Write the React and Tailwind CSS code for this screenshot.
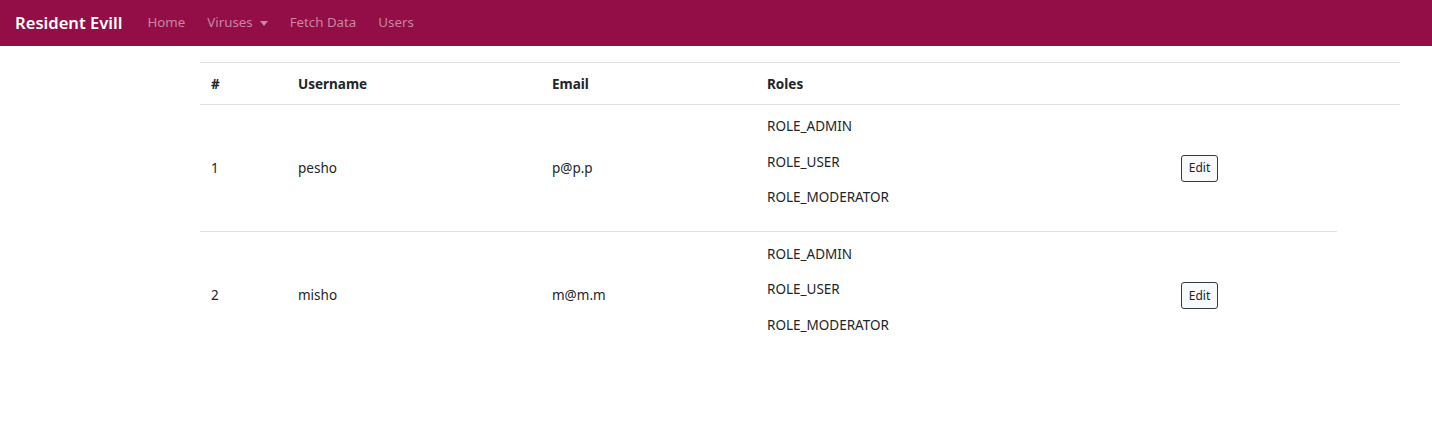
import React from 'react'

const users = [
  { id: 1, username: 'pesho', email: 'p@p.p', roles: ['ROLE_ADMIN', 'ROLE_USER', 'ROLE_MODERATOR'] },
  { id: 2, username: 'misho', email: 'm@m.m', roles: ['ROLE_ADMIN', 'ROLE_USER', 'ROLE_MODERATOR'] }
]

const Navbar = () => (
  <nav className="h-[46px] bg-[#930e47] flex items-center pl-[15px]">
    <span className="text-[16.6px] font-semibold text-white mr-[14px]">Resident Evill</span>
    <div className="flex items-center text-[13.3px] text-[#c985a3]">
      <span className="px-[11px]">Home</span>
      <span className="px-[11px] flex items-center">
        Viruses
        <span className="ml-[7px] w-0 h-0 border-l-[4.5px] border-r-[4.5px] border-t-[5px] border-l-transparent border-r-transparent border-t-[#c985a3]" />
      </span>
      <span className="px-[11px]">Fetch Data</span>
      <span className="px-[11px]">Users</span>
    </div>
  </nav>
)

const App = () => {
  return (
    <div className="min-h-[430px] bg-white text-[#212529] font-['Noto_Sans',sans-serif]">
      <Navbar />
      <div className="pl-[200px] pt-[16px] text-[13.5px]">
        <div className="w-[1200px] h-[43px] border-t border-b border-[#dee2e6] grid grid-cols-[87px_254px_215px_414px_1fr] items-center font-bold">
          <div className="pl-[11px] pt-[1px]">#</div>
          <div className="pl-[11px] pt-[1px]">Username</div>
          <div className="pl-[11px] pt-[1px]">Email</div>
          <div className="pl-[11px] pt-[1px]">Roles</div>
          <div />
        </div>
        {users.map((u, i) => (
          <div
            key={u.id}
            className={`w-[1137px] h-[127px] grid grid-cols-[87px_254px_215px_414px_1fr] items-center ${i === 0 ? 'border-b border-[#dee2e6]' : ''}`}
          >
            <div className="pl-[11px]">{u.id}</div>
            <div className="pl-[11px]">{u.username}</div>
            <div className="pl-[11px]">{u.email}</div>
            <div className="pl-[11px] pb-[13px] flex flex-col gap-[15.5px]">
              {u.roles.map((r) => (
                <span key={r} className="leading-[20px]">{r}</span>
              ))}
            </div>
            <div className="pl-[11px]">
              <button className="w-[37px] h-[27px] border border-[#343a40] rounded-[3px] bg-[#f8f9fa] text-[12px] text-[#212529]">
                Edit
              </button>
            </div>
          </div>
        ))}
      </div>
    </div>
  )
}

export default App
